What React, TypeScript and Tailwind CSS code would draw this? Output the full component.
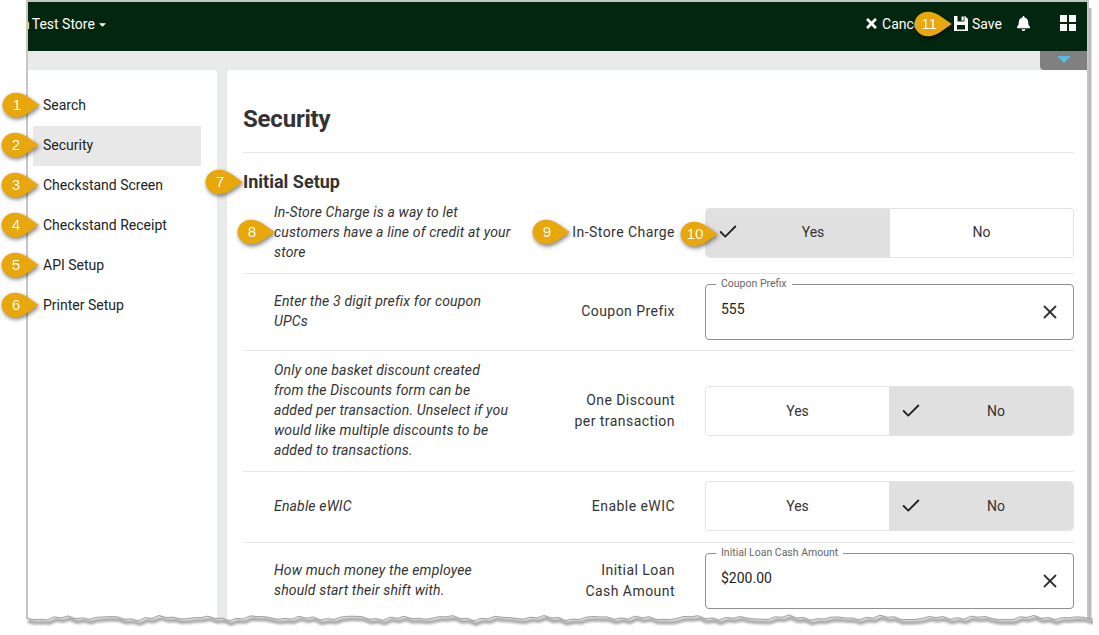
import { FaBell, FaCaretDown, FaTimes } from "react-icons/fa";
import { Check, X } from "lucide-react";

const menu = ["Search", "Security", "Checkstand Screen", "Checkstand Receipt", "API Setup", "Printer Setup"];

const callouts = [
  { n: "1", left: "left-[2px]", top: "top-[92px]" },
  { n: "2", left: "left-[1px]", top: "top-[132px]" },
  { n: "3", left: "left-[1px]", top: "top-[172px]" },
  { n: "4", left: "left-[1px]", top: "top-[212px]" },
  { n: "5", left: "left-[1px]", top: "top-[252px]" },
  { n: "6", left: "left-[1px]", top: "top-[292px]" },
  { n: "7", left: "left-[205px]", top: "top-[169px]" },
  { n: "8", left: "left-[237px]", top: "top-[219px]" },
  { n: "9", left: "left-[532px]", top: "top-[219px]" },
  { n: "10", left: "left-[680px]", top: "top-[221px]" },
  { n: "11", left: "left-[914px]", top: "top-[11px]" },
];

function Callout({ n, left, top }: { n: string; left: string; top: string }) {
  return (
    <div className={`absolute ${left} ${top} w-[38px] h-[26px] drop-shadow-[1px_2px_2px_rgba(0,0,0,0.5)]`}>
      <svg viewBox="0 0 38 26" className="absolute inset-0 w-[38px] h-[26px]">
        <path d="M14 .8C23 .8 30 8 37.8 13C30 18 23 25.2 14 25.2C6 25.2 .5 19 .5 13C.5 7 6 .8 14 .8Z" fill="#e8a80d" />
      </svg>
      <span className="absolute left-0 top-0 w-[30px] h-[26px] flex items-center justify-center text-white text-[15px] font-['Liberation_Sans',sans-serif]">
        {n}
      </span>
    </div>
  );
}

function Toggle({ value }: { value: "Yes" | "No" }) {
  const option = (name: "Yes" | "No", rounded: string, width: string) => {
    const on = name === value;
    return (
      <div className={`relative ${width} flex items-center justify-center pb-[1px] text-sm text-[#333] ${rounded} ${on ? "bg-[#e0e0e0] pl-[30px]" : ""}`}>
        {on && <Check size={22} strokeWidth={2} className="absolute left-[11px] text-[#222]" />}
        {name}
      </div>
    );
  };
  return (
    <div className="w-[369px] h-[50px] flex rounded border border-[#e3e3e3]">
      {option("Yes", "rounded-l", value === "Yes" ? "w-[184px]" : "w-[183px]")}
      {option("No", "rounded-r", "flex-1")}
    </div>
  );
}

function OutlinedField({ label, value }: { label: string; value: string }) {
  return (
    <div className="relative w-[369px] h-[56px] rounded border border-[#8f8f8f] flex items-center justify-between pl-[15px] pr-[12px]">
      <span className="absolute left-[10px] -top-[8px] bg-white px-[5px] text-[10.5px] leading-[14px] text-[#666]">
        {label}
      </span>
      <span className="text-sm text-[#222] -mt-[6px]">{value}</span>
      <X size={22} strokeWidth={2} className="text-[#333]" />
    </div>
  );
}

function Row({ desc, label, h, last, up, children }: { desc: string; label: React.ReactNode; h: string; last?: boolean; up?: boolean; children: React.ReactNode }) {
  return (
    <div className={`flex items-center ${h} ${last ? "" : "border-b border-[#e8e8e8]"}`}>
      <p className="w-[238px] ml-[31px] mr-[2px] pb-[2px] text-sm leading-5 italic text-[#333] tracking-[0.16px]">{desc}</p>
      <div className={`w-[161px] text-right text-sm leading-[21px] text-[#333] tracking-[0.45px] ${last ? "" : "pb-[1px]"}`}>{label}</div>
      <div className={`ml-[30px] ${up ? "pb-[2px]" : ""}`}>{children}</div>
    </div>
  );
}

// jagged line for the torn paper look, same every render
const tornEdge = Array.from({ length: 154 }, (_, i) => {
  const x = i * 7;
  const y = 7 + 1.4 * Math.sin(x * 0.13) + 1.1 * Math.sin(x * 0.41) + 0.6 * Math.sin(x * 0.97);
  return `${i === 0 ? "M" : "L"}${x} ${y.toFixed(1)}`;
}).join("");

export default function App() {
  return (
    <div className="relative w-[1099px] h-[635px] bg-white overflow-hidden font-['Roboto',sans-serif]">
      {/* screenshot frame */}
      <div className="absolute left-[26px] top-0 h-[622px] border-l-2 border-t-2 border-[#c6c6c6]">
        <div className="w-[1061px] h-full bg-[#e9ebeb] overflow-hidden border-r-2 border-[#c6c6c6]">
          <header className="h-[49px] bg-[#03260e] flex items-center text-white text-sm pb-[5px]">
            <span className="ml-[-6px]">n</span>
            <span className="ml-[2px]">Test Store</span>
            <FaCaretDown size={11} className="ml-[2px]" />
            <div className="ml-auto flex items-center">
              <FaTimes size={15} className="-mt-[1px]" />
              <span className="ml-[3px] w-[72px]">Cancel</span>
              <svg viewBox="0 0 14 15" className="w-[14px] h-[15px] -mt-[2px]">
                <path
                  fill="#fff"
                  fillRule="evenodd"
                  d="M0 0H3.5V5.5H10.5V0H11L14 3V15H0ZM7.5 .5H9.8V4.5H7.5ZM3 9V13.5H11V9Z"
                />
              </svg>
              <span className="ml-[4px]">Save</span>
              <FaBell size={15} className="ml-[14px] -mt-[2px]" />
              <div className="ml-[29px] mr-[11px] -mt-[2px] w-[16px] h-[16px] grid grid-cols-2 gap-[2px]">
                <span className="bg-white" />
                <span className="bg-white" />
                <span className="bg-white" />
                <span className="bg-white" />
              </div>
            </div>
          </header>

          <div className="h-[19px] flex justify-end">
            <div className="w-[47px] h-[19px] bg-[#808080] rounded-bl flex justify-center pt-[5px]">
              <div className="w-0 h-0 border-x-[7px] border-x-transparent border-t-[7px] border-t-[#5cb9dd]" />
            </div>
          </div>

          <div className="flex gap-[10px] h-[560px]">
            <aside className="w-[190px] bg-white rounded-tr pl-[5px] pr-[16px] pt-[16px]">
              {menu.map((item) => (
                <div
                  key={item}
                  className={`h-10 flex items-center pl-[10px] pb-[2px] text-sm text-[#222] ${item === "Security" ? "bg-[#e8e8e8]" : ""}`}
                >
                  {item}
                </div>
              ))}
            </aside>

            <main className="flex-1 bg-white rounded-t pl-[16px] pr-[13px] pt-[32px]">
              <h1 className="text-2xl leading-[34px] font-bold text-[#333] pb-[16px] border-b border-[#e8e8e8] tracking-[-0.2px]">Security</h1>
              <h2 className="mt-[19px] text-lg leading-[20px] font-bold text-[#333]">Initial Setup</h2>
              <Row h="h-[82px]" label="In-Store Charge" desc="In-Store Charge is a way to let customers have a line of credit at your store">
                <Toggle value="Yes" />
              </Row>
              <Row h="h-[77px]" label="Coupon Prefix" desc="Enter the 3 digit prefix for coupon UPCs">
                <OutlinedField label="Coupon Prefix" value="555" />
              </Row>
              <Row
                h="h-[121px]"
                label={<>One Discount<br />per transaction</>}
                desc="Only one basket discount created from the Discounts form can be added per transaction. Unselect if you would like multiple discounts to be added to transactions."
              >
                <Toggle value="No" />
              </Row>
              <Row h="h-[71px]" up label="Enable eWIC" desc="Enable eWIC">
                <Toggle value="No" />
              </Row>
              <Row h="h-[75px]" last label={<>Initial Loan<br />Cash Amount</>} desc="How much money the employee should start their shift with.">
                <OutlinedField label="Initial Loan Cash Amount" value="$200.00" />
              </Row>
            </main>
          </div>
        </div>
      </div>

      {/* shadow down the right side of the screenshot */}
      <div className="absolute left-[1089px] top-[8px] w-[3px] h-[612px] bg-gradient-to-r from-[#a8a8a8] to-[#e4e4e4]" />

      {/* torn bottom edge of the screenshot */}
      <svg viewBox="0 0 1067 25" className="absolute left-[26px] top-[611px] w-[1067px] h-[25px]">
        <path d={`${tornEdge}L1067 7L1067 25L0 25Z`} fill="#fff" />
        <path d={tornEdge} transform="translate(2 3)" fill="none" stroke="#aaaaaa" strokeWidth="4" className="blur-[1px]" />
        <path d={tornEdge} fill="none" stroke="#a0a0a0" strokeWidth="1" />
      </svg>

      {callouts.map((c) => (
        <Callout key={c.n} {...c} />
      ))}
    </div>
  );
}
